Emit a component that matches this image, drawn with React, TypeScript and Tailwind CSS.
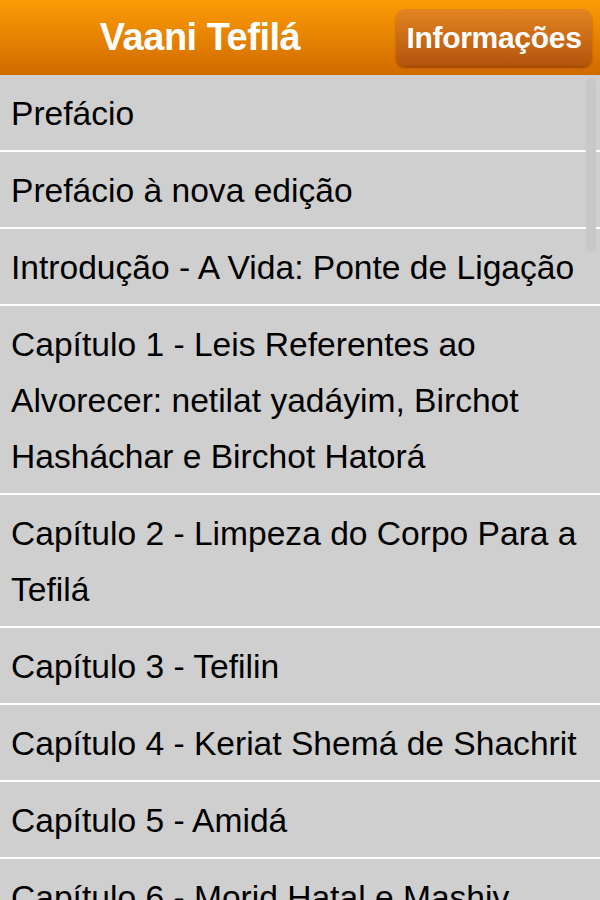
const items = [
  'Prefácio',
  'Prefácio à nova edição',
  'Introdução - A Vida: Ponte de Ligação',
  'Capítulo 1 - Leis Referentes ao Alvorecer: netilat yadáyim, Birchot Hasháchar e Birchot Hatorá',
  'Capítulo 2 - Limpeza do Corpo Para a Tefilá',
  'Capítulo 3 - Tefilin',
  'Capítulo 4 - Keriat Shemá de Shachrit',
  'Capítulo 5 - Amidá',
  'Capítulo 6 - Morid Hatal e Mashiv Haruach',
  'Capítulo 7 - Tachanun',
]

export default function App() {
  return (
    <div className="h-[900px] w-[600px] overflow-hidden bg-[#cfcfcf] font-['Liberation_Sans',Arial,sans-serif]">
      {/* cabeçalho */}
      <header className="flex h-[75px] items-center bg-gradient-to-b from-[#fc9c06] to-[#d06a00] pr-2">
        <h1 className="flex-1 pl-[4px] text-center text-[38px] font-bold tracking-[-0.5px] text-white">Vaani Tefilá</h1>
        <button className="flex h-[57px] w-[196px] items-center justify-center rounded-[9px] bg-gradient-to-b from-[#e38422] to-[#b3540e] text-[30px] font-bold tracking-[-0.3px] text-white shadow-[0_2px_2px_rgba(120,50,0,0.6)]">
          Informações
        </button>
      </header>

      {/* lista */}
      <div className="relative">
        <ul>
          {items.map((t) => (
            <li key={t} className="border-b-2 border-white pt-[11px] pb-[8px] pl-[11px] pr-3 text-[33.6px] leading-[56px] text-black">
              {t}
            </li>
          ))}
        </ul>
        <div className="absolute right-[4px] top-[3px] h-[175px] w-[10px] rounded-full bg-[#c8c8c8]" />
      </div>
    </div>
  )
}
